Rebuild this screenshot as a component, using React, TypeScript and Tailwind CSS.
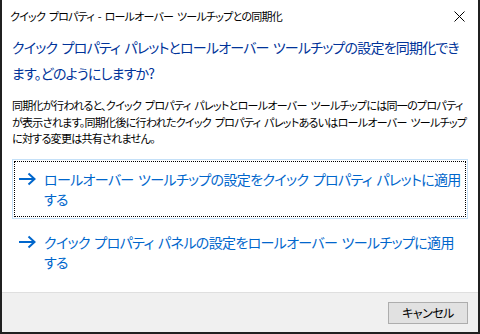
import React from 'react';

const jp = "font-['Yu_Gothic_UI','Noto_Sans_CJK_JP',sans-serif] [font-feature-settings:'palt'] [word-spacing:2px]";

function Arrow() {
  return (
    <svg width="17" height="14" viewBox="0 0 17 14" className="shrink-0">
      <path d="M0 7H15.5M9.5 1.5L15.5 7L9.5 12.5" fill="none" stroke="#0066cc" strokeWidth="2" />
    </svg>
  );
}

function CommandLink({ lines, focused }: { lines: string[]; focused?: boolean }) {
  return (
    <div className={focused ? 'border border-[#c4e0f8] bg-white p-[1px]' : 'border border-transparent p-[1px]'}>
      <div
        className={
          focused
            ? 'border border-dotted border-black flex gap-[8px] pl-[4px] pt-[7px] pb-[7px]'
            : 'border border-transparent flex gap-[8px] pl-[4px] pt-[7px] pb-[7px]'
        }
      >
        <div className="pt-[3px]">
          <Arrow />
        </div>
        <div className="text-[14px] leading-[20px] tracking-[-0.65px] text-[#0066cc] whitespace-nowrap">
          {lines.map((l) => (
            <div key={l}>{l}</div>
          ))}
        </div>
      </div>
    </div>
  );
}

export default function App() {
  return (
    <div className={`w-[480px] h-[334px] bg-white border-x-2 border-b-2 border-[#202020] flex flex-col ${jp}`}>
      <div className="h-[32px] shrink-0 flex items-center justify-between pl-[8px] pr-[13px] text-[11px] leading-[16px] tracking-[-0.75px] text-black">
        <span>クイック プロパティ - ロールオーバー ツールチップとの同期化</span>
        <svg width="11" height="11" viewBox="0 0 11 11">
          <path d="M0.5 0.5L10.5 10.5M10.5 0.5L0.5 10.5" stroke="#000" strokeWidth="1" />
        </svg>
      </div>
      <div className="flex-1 px-[10px] pt-[2px]">
        <div className="text-[14px] leading-[26px] tracking-[-0.8px] text-[#003399] whitespace-nowrap">
          <div>クイック プロパティ パレットとロールオーバー ツールチップの設定を同期化でき</div>
          <div>ます。どのようにしますか?</div>
        </div>
        <div className="mt-[11px] text-[11px] leading-[16.5px] tracking-[-0.7px] text-black whitespace-nowrap">
          <div>同期化が行われると、クイック プロパティ パレットとロールオーバー ツールチップには同一のプロパティ</div>
          <div>が表示されます。同期化後に行われたクイック プロパティ パレットあるいはロールオーバー ツールチップ</div>
          <div>に対する変更は共有されません。</div>
        </div>
        <div className="mt-[12px] flex flex-col gap-[3px]">
          <CommandLink focused lines={['ロールオーバー ツールチップの設定をクイック プロパティ パレットに適用', 'する']} />
          <CommandLink lines={['クイック プロパティ パネルの設定をロールオーバー ツールチップに適用', 'する']} />
        </div>
      </div>
      <div className="h-[40px] shrink-0 bg-[#f0f0f0] border-t border-[#dfdfdf] flex items-start justify-end pt-[9px] pr-[10px]">
        <button className="w-[80px] h-[22px] bg-[#e1e1e1] border border-[#adadad] text-[12px] leading-[20px] tracking-[-0.5px] text-black">
          キャンセル
        </button>
      </div>
    </div>
  );
}
